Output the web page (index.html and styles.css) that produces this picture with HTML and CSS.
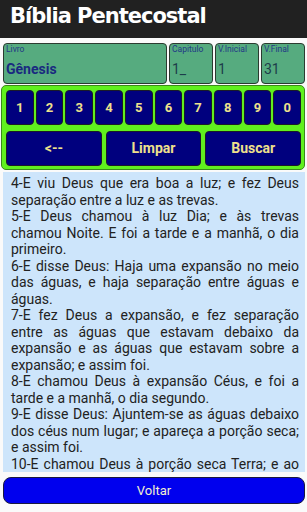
FILE: index.html
```html
<!DOCTYPE html>
<html>
	<head>
		<meta charset="utf-8" />
		<title>Bíblia Pentecostal</title>
		<link rel="stylesheet" href="styles.css">
	</head>
	<body>
		<div class="top-bar">Bíblia Pentecostal</div>

		<div class="page">
			<div class="fields">
				<div class="field field-book">
					<span class="field-label">Livro</span>
					<span class="field-value book-name">Gênesis</span>
				</div>
				<div class="field">
					<span class="field-label">Capitulo</span>
					<span class="field-value">1_</span>
				</div>
				<div class="field">
					<span class="field-label">V.Inicial</span>
					<span class="field-value">1</span>
				</div>
				<div class="field">
					<span class="field-label">V.Final</span>
					<span class="field-value">31</span>
				</div>
			</div>

			<div class="keypad">
				<div class="key-row">
					<div class="key">1</div>
					<div class="key">2</div>
					<div class="key">3</div>
					<div class="key">4</div>
					<div class="key">5</div>
					<div class="key">6</div>
					<div class="key">7</div>
					<div class="key">8</div>
					<div class="key">9</div>
					<div class="key">0</div>
				</div>
				<div class="key-row action-row">
					<div class="key">&lt;--</div>
					<div class="key">Limpar</div>
					<div class="key">Buscar</div>
				</div>
			</div>

			<div class="verses">
				<p>4-E viu Deus que era boa a luz; e fez Deus separação entre a luz e as trevas.</p>
				<p>5-E Deus chamou à luz Dia; e às trevas chamou Noite. E foi a tarde e a manhã, o dia primeiro.</p>
				<p>6-E disse Deus: Haja uma expansão no meio das águas, e haja separação entre águas e águas.</p>
				<p>7-E fez Deus a expansão, e fez separação entre as águas que estavam debaixo da expansão e as águas que estavam sobre a expansão; e assim foi.</p>
				<p>8-E chamou Deus à expansão Céus, e foi a tarde e a manhã, o dia segundo.</p>
				<p>9-E disse Deus: Ajuntem-se as águas debaixo dos céus num lugar; e apareça a porção seca; e assim foi.</p>
				<p class="cut">10-E chamou Deus à porção seca Terra; e ao</p>
			</div>

			<div class="back-btn">Voltar</div>
		</div>
	</body>
</html>
```

FILE: styles.css
```css
*{
	margin: 0;
	padding: 0;
	box-sizing: border-box;
}

html,body{
	width: 100%;
	height: 100%;
	overflow: hidden;
}

body{
	background-color: #fafafa;
	font-family: Roboto, "Liberation Sans", sans-serif;
}

.top-bar{
	height: 38px;
	padding: 4px 0 0 10px;
	background-color: #212121;
	color: #fff;
	font-family: "DejaVu Sans", sans-serif;
	font-weight: bold;
	font-size: 21px;
	letter-spacing: -1px;
}

.page{
	padding: 0 2px 0 3px;
}

.fields{
	display: flex;
	gap: 2px;
	height: 41px;
	margin-top: 5px;
}

.field{
	display: flex;
	flex-direction: column;
	width: 44px;
	padding: 0 2px;
	background-color: #56ab7f;
	border: 1px solid #2b3b30;
	border-radius: 4px;
}

.field-book{
	flex: 1;
}

.field-label{
	font-size: 8.5px;
	line-height: 11px;
	color: #233a86;
}

.field-value{
	margin-top: 6px;
	font-size: 14px;
	color: #1d3d4a;
}

.book-name{
	font-weight: bold;
	color: #1a2a80;
}

.keypad{
	display: flex;
	flex-direction: column;
	gap: 6px;
	height: 85px;
	margin: 1px 0 0 -2px;
	padding: 4px 3px 3px 4px;
	background-color: #60f01e;
	border: 1px solid #3a8a1a;
	border-radius: 5px;
}

.key-row{
	display: flex;
	gap: 2px;
	height: 35px;
}

.action-row{
	gap: 4px;
	height: 36px;
}

.key{
	flex: 1;
	display: flex;
	align-items: center;
	justify-content: center;
	background-color: #00007e;
	border: 1px solid #1a1a2a;
	border-radius: 4px;
	color: #eee08c;
	font-weight: bold;
	font-size: 13px;
}

.action-row .key{
	font-size: 14px;
}

.verses{
	height: 300px;
	margin-top: 2px;
	padding: 3px 6px 0 8px;
	overflow: hidden;
	background-color: #cde5fb;
	color: #222;
	font-size: 14px;
	line-height: 16.5px;
	text-align: justify;
}

.cut{
	text-align-last: justify;
}

.back-btn{
	display: flex;
	align-items: center;
	justify-content: center;
	height: 27px;
	margin-top: 5px;
	background-color: #0000ee;
	border: 1px solid #1a1a40;
	border-radius: 8px;
	color: #f2eed0;
	font-size: 13px;
}
```
